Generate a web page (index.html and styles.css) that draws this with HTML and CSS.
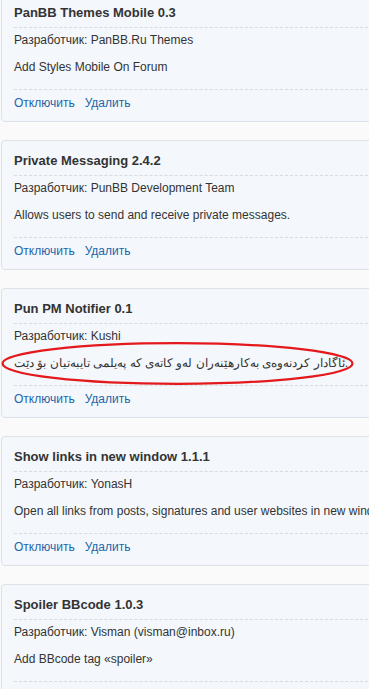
FILE: index.html
```html
<!DOCTYPE html>
<html lang="ru">
<head>
  <meta charset="UTF-8" />
  <meta name="viewport" content="width=device-width, initial-scale=1.0"/>
  <title>Расширения</title>
  <link rel="stylesheet" href="styles.css">
</head>
<body>

  <div class="ext-list">

    <div class="ext">
      <h3 class="ext-title">PanBB Themes Mobile 0.3</h3>
      <div class="ext-body">
        <p>Разработчик: PanBB.Ru Themes</p>
        <p>Add Styles Mobile On Forum</p>
      </div>
      <div class="ext-actions">
        <a href="#">Отключить</a>
        <a href="#">Удалить</a>
      </div>
    </div>

    <div class="ext">
      <h3 class="ext-title">Private Messaging 2.4.2</h3>
      <div class="ext-body">
        <p>Разработчик: PunBB Development Team</p>
        <p>Allows users to send and receive private messages.</p>
      </div>
      <div class="ext-actions">
        <a href="#">Отключить</a>
        <a href="#">Удалить</a>
      </div>
    </div>

    <div class="ext">
      <h3 class="ext-title">Pun PM Notifier 0.1</h3>
      <div class="ext-body">
        <p>Разработчик: Kushi</p>
        <p class="marked">ئاگادار کردنەوەی بەکارهێنەران لەو کاتەی کە پەیلمی تایبەتیان بۆ دێت.
          <!-- пометка на скриншоте -->
          <svg class="mark" width="353" height="43" viewBox="0 0 353 43" aria-hidden="true">
            <ellipse cx="176.5" cy="21.5" rx="175" ry="20.3" fill="none" stroke="#e3191c" stroke-width="2.2"/>
          </svg>
        </p>
      </div>
      <div class="ext-actions">
        <a href="#">Отключить</a>
        <a href="#">Удалить</a>
      </div>
    </div>

    <div class="ext">
      <h3 class="ext-title">Show links in new window 1.1.1</h3>
      <div class="ext-body">
        <p>Разработчик: YonasH</p>
        <p>Open all links from posts, signatures and user websites in new window.</p>
      </div>
      <div class="ext-actions">
        <a href="#">Отключить</a>
        <a href="#">Удалить</a>
      </div>
    </div>

    <div class="ext">
      <h3 class="ext-title">Spoiler BBcode 1.0.3</h3>
      <div class="ext-body">
        <p>Разработчик: Visman (visman@inbox.ru)</p>
        <p>Add BBcode tag «spoiler»</p>
      </div>
      <div class="ext-actions">
        <a href="#">Отключить</a>
        <a href="#">Удалить</a>
      </div>
    </div>

  </div>

</body>
</html>
```

FILE: styles.css
```css
/* Страница */
html, body {
  margin: 0;
  padding: 0;
  background: #fafafa;
  overflow-x: hidden;
}

body {
  font-family: "Liberation Sans", Arial, sans-serif;
  font-size: 12px;
  line-height: 16px;
  color: #333;
}

/* Список расширений (страница прокручена) */
.ext-list {
  margin-top: -8px;
  padding-left: 1px;
}

.ext {
  width: 560px;
  margin-bottom: 18px;
  padding: 0 12px;
  background: #f4f8fc;
  border: 1px solid #dde2e8;
  border-radius: 4px;
}

.ext-title {
  margin: 0;
  padding: 12px 0 6px;
  font-size: 13px;
  line-height: 16px;
  font-weight: bold;
  color: #333;
  border-bottom: 1px dashed #d5dbe1;
}

.ext-body {
  display: flex;
  flex-direction: column;
  gap: 11px;
  padding: 4px 0 14px;
  border-bottom: 1px dashed #d5dbe1;
}

.ext-body p {
  margin: 0;
  white-space: nowrap;
}

.ext-actions {
  display: flex;
  gap: 10px;
  padding: 5px 0 10px;
}

.ext-actions a {
  color: #1f64a8;
  text-decoration: none;
}

/* Красный овал поверх описания */
.marked {
  position: relative;
  font-size: 12.25px;
}

.mark {
  position: absolute;
  left: -13px;
  top: -13px;
}
```
